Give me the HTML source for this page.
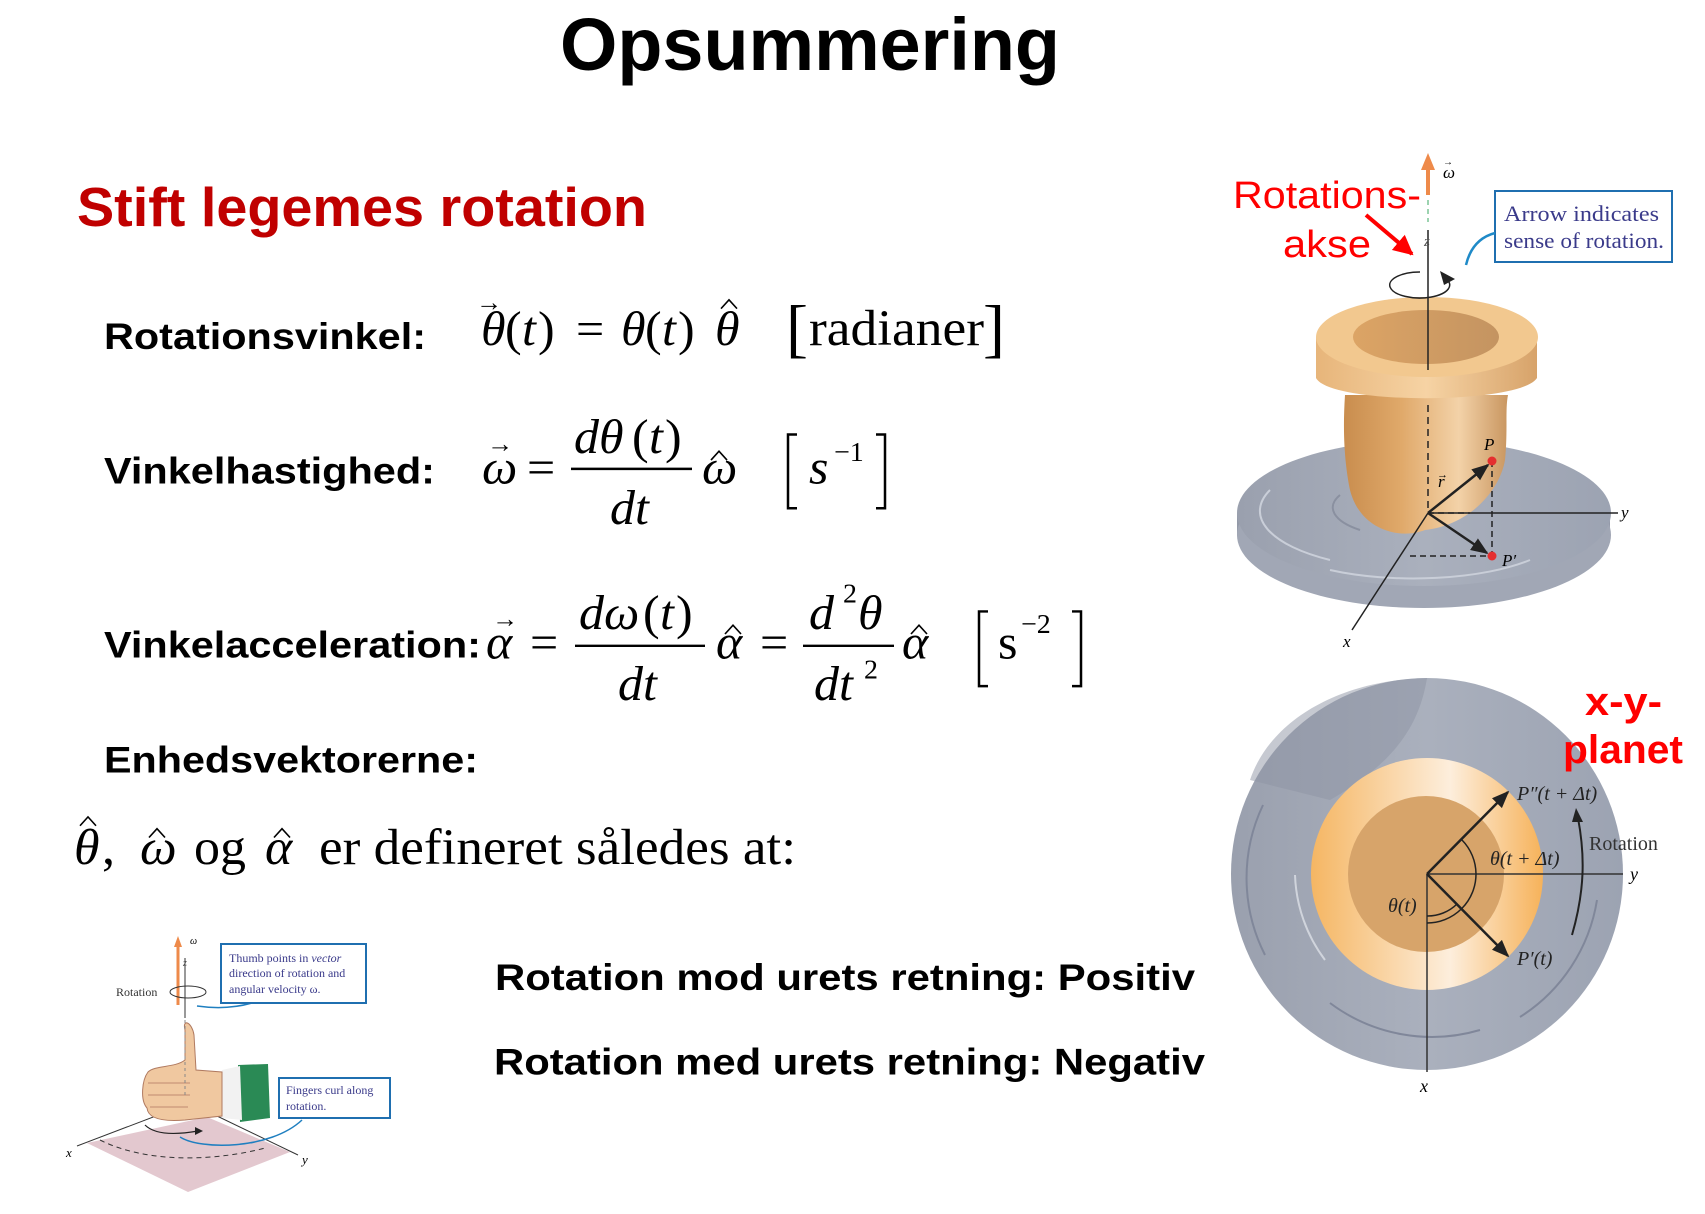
<!DOCTYPE html>
<html><head><meta charset="utf-8"><style>
html,body{margin:0;padding:0;background:#fff;}
svg{display:block}
.b{font-family:"Liberation Sans",Arial,sans-serif;font-weight:bold}
.m{font-family:"Liberation Serif","Times New Roman",serif;font-style:italic}
.r{font-family:"Liberation Serif","Times New Roman",serif}
</style></head><body>
<svg width="1705" height="1214" viewBox="0 0 1705 1214" xmlns="http://www.w3.org/2000/svg">
<defs>
<linearGradient id="pot" x1="0" x2="1" y1="0" y2="0">
<stop offset="0" stop-color="#c98d4e"/><stop offset="0.35" stop-color="#e0a96a"/><stop offset="0.7" stop-color="#f3d2a8"/><stop offset="1" stop-color="#c99660"/></linearGradient>
<linearGradient id="rim" x1="0" x2="1"><stop offset="0" stop-color="#e7b57a"/><stop offset="0.5" stop-color="#f6d3a4"/><stop offset="1" stop-color="#d7a36a"/></linearGradient>
<linearGradient id="hole" x1="0" x2="1"><stop offset="0" stop-color="#dca465"/><stop offset="1" stop-color="#c49461"/></linearGradient>
<linearGradient id="ring" x1="0" x2="1"><stop offset="0" stop-color="#f5b663"/><stop offset="0.6" stop-color="#fdeedc"/><stop offset="1" stop-color="#f6b25a"/></linearGradient>
<linearGradient id="disk" x1="0" x2="1"><stop offset="0" stop-color="#9aa0ae"/><stop offset="0.5" stop-color="#aab0bd"/><stop offset="1" stop-color="#9ca3b2"/></linearGradient>
<marker id="ah" viewBox="0 0 10 10" refX="9" refY="5" markerWidth="7" markerHeight="7" orient="auto"><path d="M0,1 L10,5 L0,9 z" fill="#222"/></marker>
<marker id="ahr" viewBox="0 0 10 10" refX="9" refY="5" markerWidth="5" markerHeight="5" orient="auto"><path d="M0,0 L10,5 L0,10 z" fill="#f00"/></marker>
</defs>

<!-- Title -->
<text x="560" y="70" class="b" font-size="74" textLength="500" lengthAdjust="spacingAndGlyphs">Opsummering</text>

<g transform="matrix(1,0,0,0.983,0,0)">
<text x="77" y="230" class="b" font-size="56" fill="#c00000" textLength="570" lengthAdjust="spacingAndGlyphs">Stift legemes rotation</text>

<!-- labels -->
<text x="104" y="355" class="b" font-size="38" textLength="322" lengthAdjust="spacingAndGlyphs">Rotationsvinkel:</text>
<text x="104" y="492" class="b" font-size="38" textLength="331" lengthAdjust="spacingAndGlyphs">Vinkelhastighed:</text>
<text x="104" y="669" class="b" font-size="38" textLength="377" lengthAdjust="spacingAndGlyphs">Vinkelacceleration:</text>
<text x="104" y="786" class="b" font-size="38" textLength="374" lengthAdjust="spacingAndGlyphs">Enhedsvektorerne:</text>

<g fill="none" stroke="#000" stroke-width="1.6">
<path d="M721,314 L729,305 L737,314"/>
<path d="M711,468 L719,459 L727,468"/>
<path d="M725,645 L733,636 L741,645"/>
<path d="M911,645 L919,636 L927,645"/>
<path d="M80,840 L88,831 L96,840"/>
<path d="M149,852 L157,843 L165,852"/>
<path d="M274,852 L282,843 L290,852"/>
</g>

<!-- theta line -->
<g font-size="50">
<text x="481" y="351" class="m">θ</text><text x="476" y="316" class="r" font-size="26">→</text>
<text x="505" y="351" class="r">(</text><text x="522" y="351" class="m">t</text><text x="538" y="351" class="r">)</text>
<text x="576" y="351" class="r">=</text>
<text x="621" y="351" class="m">θ</text><text x="645" y="351" class="r">(</text><text x="662" y="351" class="m">t</text><text x="678" y="351" class="r">)</text>
<text x="715" y="351" class="m">θ</text>
<text x="786" y="356" class="r" font-size="66">[</text>
<text x="809" y="351" class="r" font-size="52" textLength="175" lengthAdjust="spacingAndGlyphs">radianer</text>
<text x="983" y="356" class="r" font-size="66">]</text>
</g>

<!-- omega line -->
<g font-size="50">
<text x="482" y="492" class="m">ω</text><text x="487" y="460" class="r" font-size="26">→</text>
<text x="527" y="492" class="r">=</text>
<text x="574" y="461" class="m">dθ</text><text x="632" y="461" class="r">(</text><text x="649" y="461" class="m">t</text><text x="665" y="461" class="r">)</text>
<line x1="571" y1="477" x2="692" y2="477" stroke="#000" stroke-width="2.5"/>
<text x="610" y="533" class="m">dt</text>
<text x="702" y="492" class="m">ω</text>
<path d="M797,442 H788 V517 H797" fill="none" stroke="#000" stroke-width="2.5"/>
<text x="809" y="492" class="m">s</text>
<text x="834" y="469" class="r" font-size="28">−1</text>
<path d="M876,442 H885 V517 H876" fill="none" stroke="#000" stroke-width="2.5"/>
</g>

<!-- alpha line -->
<g font-size="50">
<text x="486" y="670" class="m">α</text><text x="492" y="638" class="r" font-size="26">→</text>
<text x="530" y="670" class="r">=</text>
<text x="579" y="640" class="m">dω</text><text x="643" y="640" class="r">(</text><text x="660" y="640" class="m">t</text><text x="676" y="640" class="r">)</text>
<line x1="575" y1="657" x2="705" y2="657" stroke="#000" stroke-width="2.5"/>
<text x="618" y="712" class="m">dt</text>
<text x="716" y="670" class="m">α</text>
<text x="760" y="670" class="r">=</text>
<text x="809" y="640" class="m">d</text><text x="843" y="613" class="r" font-size="28">2</text><text x="858" y="640" class="m">θ</text>
<line x1="803" y1="657" x2="894" y2="657" stroke="#000" stroke-width="2.5"/>
<text x="814" y="712" class="m">dt</text><text x="864" y="690" class="r" font-size="28">2</text>
<text x="902" y="670" class="m">α</text>
<path d="M988,622 H979 V698 H988" fill="none" stroke="#000" stroke-width="2.5"/>
<text x="998" y="670" class="r">s</text>
<text x="1021" y="644" class="r" font-size="28">−2</text>
<path d="M1072,622 H1081 V698 H1072" fill="none" stroke="#000" stroke-width="2.5"/>
</g>

<!-- unit vectors line -->
<g font-size="52">
<text x="74" y="879" class="m">θ</text>
<text x="102" y="879" class="r">,</text>
<text x="140" y="879" class="m">ω</text>
<text x="194" y="879" class="r">og</text>
<text x="265" y="879" class="m">α</text>
<text x="319" y="879" class="r" textLength="477" lengthAdjust="spacingAndGlyphs">er defineret således at:</text>
</g>

<!-- sign texts -->
<text x="495" y="1007" class="b" font-size="38" textLength="700" lengthAdjust="spacingAndGlyphs">Rotation mod urets retning: Positiv</text>
<text x="494" y="1093" class="b" font-size="38" textLength="711" lengthAdjust="spacingAndGlyphs">Rotation med urets retning: Negativ</text>
</g>

<!-- ===== top right figure ===== -->
<g>
<path d="M1237,513 L1237,535 A187,73 0 0 0 1610,535 L1610,513 Z" fill="#9399a8"/>
<ellipse cx="1424" cy="535" rx="187" ry="73" fill="#a1a7b5"/>
<ellipse cx="1424" cy="513" rx="187" ry="73" fill="url(#disk)"/>
<path d="M1270,490 A150,58 0 0 0 1330,560" fill="none" stroke="#c9ced8" stroke-width="2"/>
<path d="M1330,570 A150,50 0 0 0 1530,560" fill="none" stroke="#c9ced8" stroke-width="2"/>
<path d="M1340,495 A80,30 0 0 0 1360,530" fill="none" stroke="#8a90a0" stroke-width="2"/>
<path d="M1345,395 C1342,440 1346,470 1350,490 C1360,530 1400,540 1425,530 C1470,525 1500,490 1505,460 C1508,430 1505,410 1508,395 Z" fill="url(#pot)"/>
<path d="M1316,337 L1316,378 C1330,405 1520,405 1537,378 L1537,337 Z" fill="url(#rim)"/>
<ellipse cx="1427" cy="337" rx="111" ry="40" fill="#f2c88f"/>
<ellipse cx="1426" cy="337" rx="73" ry="27" fill="url(#hole)"/>
<line x1="1428" y1="230" x2="1428" y2="370" stroke="#222" stroke-width="1.5"/>
<line x1="1428" y1="405" x2="1428" y2="513" stroke="#222" stroke-width="1.5" stroke-dasharray="7,5"/>
<line x1="1428" y1="513" x2="1618" y2="513" stroke="#222" stroke-width="1.5"/>
<line x1="1428" y1="513" x2="1352" y2="630" stroke="#222" stroke-width="1.5"/>
<line x1="1428" y1="513" x2="1470" y2="513" stroke="#222" stroke-width="1.5" stroke-dasharray="6,4"/>
<line x1="1410" y1="556" x2="1490" y2="556" stroke="#222" stroke-width="1.5" stroke-dasharray="6,4"/>
<line x1="1492" y1="461" x2="1492" y2="556" stroke="#222" stroke-width="1.5" stroke-dasharray="6,4"/>
<line x1="1428" y1="513" x2="1488" y2="465" stroke="#222" stroke-width="2.5" marker-end="url(#ah)"/>
<line x1="1428" y1="513" x2="1487" y2="553" stroke="#222" stroke-width="2.5" marker-end="url(#ah)"/>
<circle cx="1492" cy="461" r="4.5" fill="#e52f2f"/>
<circle cx="1492" cy="556" r="4.5" fill="#e52f2f"/>
<text x="1484" y="450" class="m" font-size="17">P</text>
<text x="1502" y="566" class="m" font-size="17">P′</text>
<text x="1438" y="487" class="m" font-size="17">r</text><text x="1437" y="478" class="r" font-size="11">→</text>
<text x="1621" y="518" class="m" font-size="17">y</text>
<text x="1343" y="647" class="m" font-size="17">x</text>
<text x="1424" y="246" class="m" font-size="15" fill="#555">z</text>
<line x1="1428" y1="195" x2="1428" y2="168" stroke="#ee8a4a" stroke-width="4"/>
<path d="M1421,170 L1428,153 L1435,170 Z" fill="#ee8a4a"/>
<line x1="1428" y1="200" x2="1428" y2="222" stroke="#9cd3b0" stroke-width="2" stroke-dasharray="5,4"/>
<text x="1443" y="178" class="m" font-size="17">ω</text><text x="1443" y="165" class="r" font-size="10">→</text>
<path d="M1445,278 A30,13 0 1 1 1420,272" fill="none" stroke="#222" stroke-width="1.5"/>
<path d="M1440,271 L1455,279 L1444,285 Z" fill="#222"/>
<rect x="1495" y="191" width="177" height="71" fill="#fff" stroke="#1f6fb0" stroke-width="2"/>
<text x="1504" y="221" class="r" font-size="22" fill="#3a3a8a" textLength="155" lengthAdjust="spacingAndGlyphs">Arrow indicates</text>
<text x="1504" y="248" class="r" font-size="22" fill="#3a3a8a" textLength="160" lengthAdjust="spacingAndGlyphs">sense of rotation.</text>
<path d="M1466,265 C1470,248 1480,237 1495,233" fill="none" stroke="#1f8ac8" stroke-width="2.5"/>
<text x="1233" y="208" font-family="Liberation Sans,Arial,sans-serif" font-size="38" fill="#f00" textLength="188" lengthAdjust="spacingAndGlyphs">Rotations-</text>
<text x="1283" y="257" font-family="Liberation Sans,Arial,sans-serif" font-size="38" fill="#f00" textLength="88" lengthAdjust="spacingAndGlyphs">akse</text>
<line x1="1366" y1="215" x2="1412" y2="254" stroke="#f00" stroke-width="4" marker-end="url(#ahr)"/>
</g>

<!-- ===== bottom right figure ===== -->
<g>
<circle cx="1427" cy="874" r="196" fill="url(#disk)"/>
<path d="M1427,678 C1420,720 1400,760 1330,800 L1250,780 C1270,720 1340,680 1427,678 Z" fill="#8e94a3" opacity="0.5"/>
<path d="M1263,805 A170,170 0 0 0 1265,955" fill="none" stroke="#80879a" stroke-width="2"/>
<path d="M1295,875 A150,150 0 0 0 1325,960" fill="none" stroke="#d0d4dc" stroke-width="2"/>
<path d="M1330,1003 A170,170 0 0 0 1480,1030" fill="none" stroke="#80879a" stroke-width="2"/>
<path d="M1520,1017 A170,170 0 0 0 1597,900" fill="none" stroke="#80879a" stroke-width="2"/>
<circle cx="1427" cy="874" r="116" fill="url(#ring)"/>
<circle cx="1426" cy="874" r="78" fill="#d7a46a"/>
<line x1="1427" y1="874" x2="1623" y2="874" stroke="#333" stroke-width="1.5"/>
<line x1="1427" y1="874" x2="1427" y2="1072" stroke="#333" stroke-width="1.5"/>
<line x1="1427" y1="874" x2="1508" y2="792" stroke="#222" stroke-width="2.5" marker-end="url(#ah)"/>
<line x1="1427" y1="874" x2="1508" y2="956" stroke="#222" stroke-width="2.5" marker-end="url(#ah)"/>
<path d="M1457,904 A42,42 0 0 1 1427,916" fill="none" stroke="#222" stroke-width="1.5"/>
<path d="M1462,840 A49,49 0 0 1 1476,874 A49,49 0 0 1 1427,923" fill="none" stroke="#222" stroke-width="1.5"/>
<path d="M1572,935 C1585,890 1585,855 1578,818" fill="none" stroke="#222" stroke-width="2"/>
<path d="M1572,822 L1576,808 L1583,822 Z" fill="#222"/>
<text x="1517" y="800" class="m" font-size="20" fill="#222">P″(t + Δt)</text>
<text x="1490" y="865" class="m" font-size="20" fill="#222">θ(t + Δt)</text>
<text x="1388" y="912" class="m" font-size="20" fill="#222">θ(t)</text>
<text x="1517" y="965" class="m" font-size="20" fill="#222">P′(t)</text>
<text x="1589" y="850" class="r" font-size="20" fill="#333">Rotation</text>
<text x="1630" y="880" class="m" font-size="18">y</text>
<text x="1420" y="1092" class="m" font-size="18">x</text>
<text x="1585" y="715" class="b" font-size="40" fill="#f00" textLength="77" lengthAdjust="spacingAndGlyphs">x-y-</text>
<text x="1563" y="763" class="b" font-size="40" fill="#f00" textLength="120" lengthAdjust="spacingAndGlyphs">planet</text>
</g>

<!-- ===== hand figure ===== -->
<g>
<path d="M87,1143 L207,1117 L290,1152 L188,1192 Z" fill="#e3c8cf"/>
<line x1="77" y1="1146" x2="190" y2="1103" stroke="#333" stroke-width="1"/>
<line x1="190" y1="1103" x2="298" y2="1155" stroke="#333" stroke-width="1"/>
<path d="M100,1140 C150,1165 220,1160 265,1148" fill="none" stroke="#333" stroke-width="1" stroke-dasharray="5,4"/>
<text x="66" y="1157" class="m" font-size="13">x</text>
<text x="302" y="1164" class="m" font-size="13">y</text>
<path d="M238,1065 L268,1064 L270,1118 L240,1122 Z" fill="#2a8a55"/>
<path d="M222,1070 L240,1066 L242,1120 L222,1118 Z" fill="#f2f2f2"/>
<path d="M185,1030 C182,1018 192,1022 194,1035 L196,1070 L222,1072 L222,1116 L185,1120 C160,1122 148,1118 147,1108 C140,1100 142,1080 148,1072 C155,1065 175,1068 185,1060 Z" fill="#f0c8a0" stroke="#b07a60" stroke-width="1"/>
<path d="M148,1083 L190,1083 M148,1095 L190,1095 M150,1107 L188,1107" stroke="#c08a70" stroke-width="1"/>
<line x1="185" y1="1020" x2="185" y2="1095" stroke="#888" stroke-width="1" stroke-dasharray="3,3"/>
<path d="M145,1125 C155,1135 175,1135 198,1131" fill="none" stroke="#222" stroke-width="1.2"/>
<path d="M195,1127 L203,1131 L195,1135 Z" fill="#222"/>
<path d="M180,1137 C200,1150 270,1150 302,1120" fill="none" stroke="#1f7fc0" stroke-width="1.5"/>
<line x1="185" y1="958" x2="185" y2="1018" stroke="#333" stroke-width="1"/>
<line x1="178" y1="1005" x2="178" y2="945" stroke="#ee8a4a" stroke-width="3"/>
<path d="M174,947 L178,936 L182,947 Z" fill="#ee8a4a"/>
<text x="190" y="944" class="m" font-size="10">ω</text>
<text x="183" y="966" class="m" font-size="10" fill="#555">z</text>
<ellipse cx="188" cy="992" rx="18" ry="6" fill="none" stroke="#333" stroke-width="1"/>
<text x="116" y="996" class="r" font-size="12" fill="#333">Rotation</text>
<path d="M197,1006 C225,1010 245,1005 252,1003" fill="none" stroke="#1f7fc0" stroke-width="1.5"/>
<rect x="221" y="944" width="145" height="59" fill="#fff" stroke="#1f6fb0" stroke-width="2"/>
<text x="229" y="962" class="r" font-size="12" fill="#3a3a8a">Thumb points in <tspan font-style="italic">vector</tspan></text>
<text x="229" y="977" class="r" font-size="12" fill="#3a3a8a">direction of rotation and</text>
<text x="229" y="993" class="r" font-size="12" fill="#3a3a8a">angular velocity ω.</text>
<rect x="279" y="1078" width="111" height="40" fill="#fff" stroke="#1f6fb0" stroke-width="2"/>
<text x="286" y="1094" class="r" font-size="12" fill="#3a3a8a">Fingers curl along</text>
<text x="286" y="1110" class="r" font-size="12" fill="#3a3a8a">rotation.</text>
</g>
</svg>
</body></html>
